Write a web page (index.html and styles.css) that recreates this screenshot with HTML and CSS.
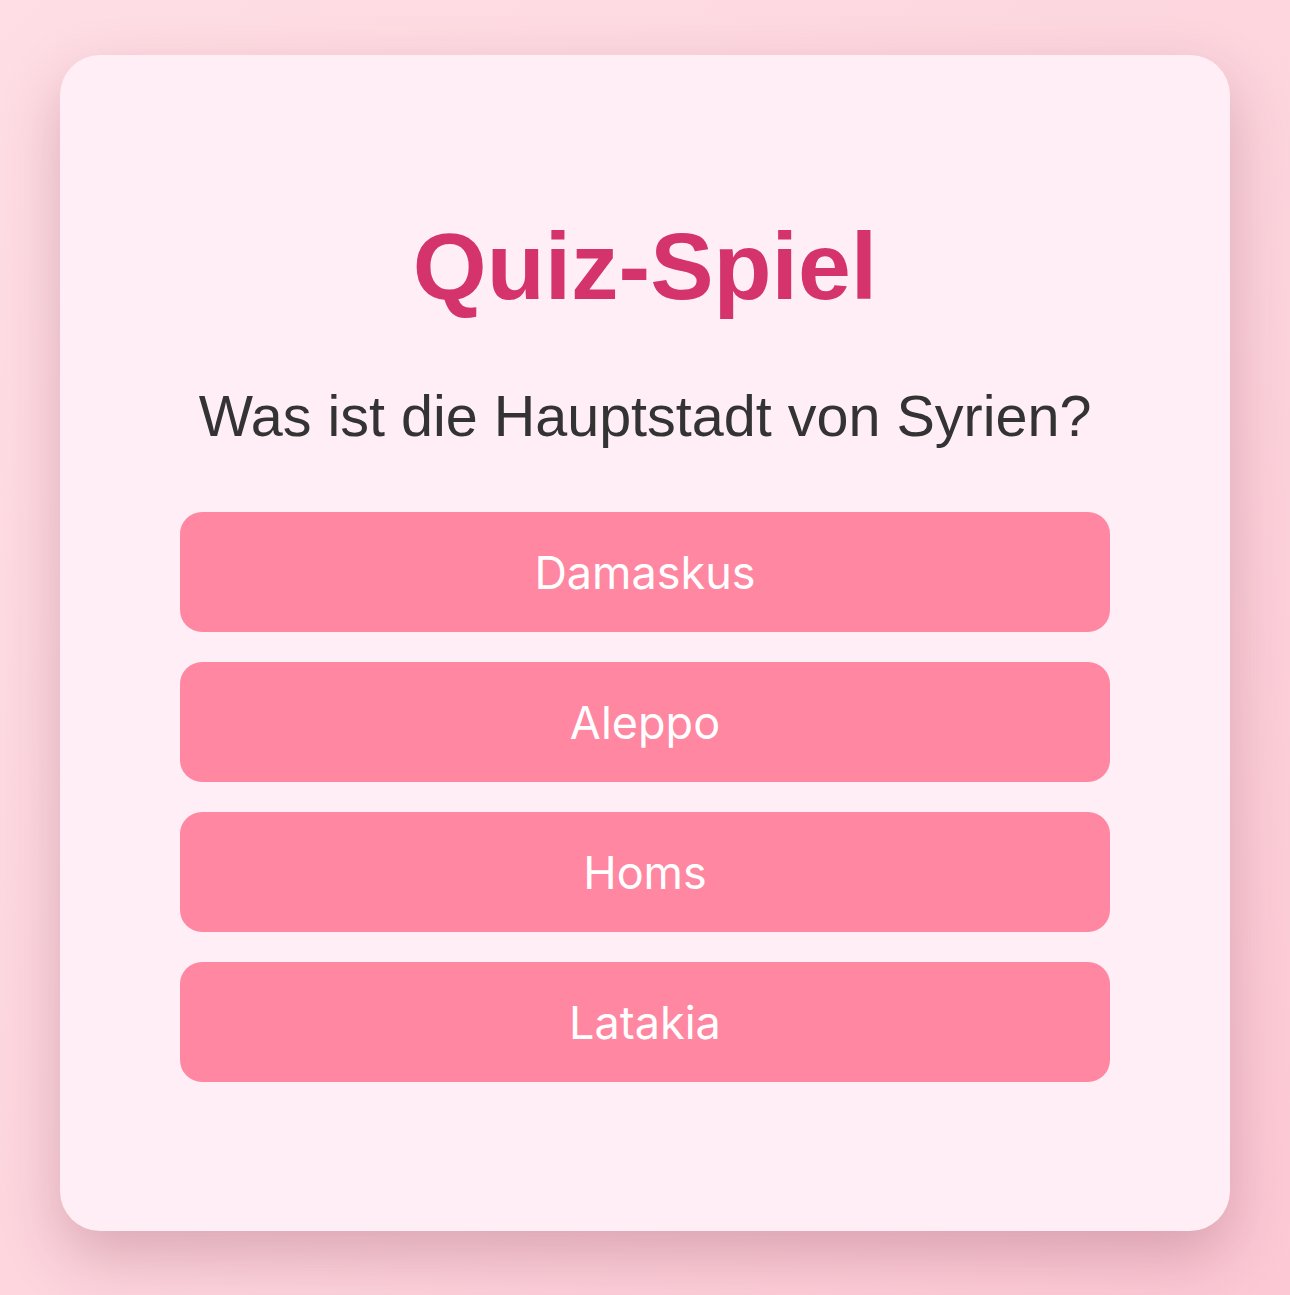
FILE: index.html
```html
<!DOCTYPE html>
<html lang="de">
<head>
<meta charset="utf-8">
<title>Quiz-Spiel</title>
<link rel="stylesheet" href="styles.css">
</head>
<body>
<main class="card">
  <h1 class="title">Quiz-Spiel</h1>
  <p class="question">Was ist die Hauptstadt von Syrien?</p>
  <div class="answers">
    <button class="answer">Damaskus</button>
    <button class="answer">Aleppo</button>
    <button class="answer">Homs</button>
    <button class="answer">Latakia</button>
  </div>
</main>
</body>
</html>
```
FILE: styles.css
```css
html, body {
  margin: 0;
  padding: 0;
}
body {
  min-height: 1295px;
  box-sizing: border-box;
  padding: 55px 60px 0;
  background: linear-gradient(135deg, #ffdee5 0%, #fdd6de 50%, #fcc8d4 100%);
  font-family: "Liberation Sans", Arial, sans-serif;
}
.card {
  background: #ffeef5;
  border-radius: 40px;
  box-shadow: 0 24px 60px rgba(120, 40, 60, 0.26);
  padding: 154px 120px 149px;
  text-align: center;
}
.title {
  margin: 0 0 59px;
  font-size: 95px;
  line-height: 114px;
  font-weight: 700;
  color: #d4336b;
}
.question {
  margin: 0 0 61px;
  font-size: 57.5px;
  line-height: 69px;
  color: #333333;
}
.answers {
  display: flex;
  flex-direction: column;
  gap: 30px;
}
.answer {
  height: 120px;
  border: none;
  border-radius: 22px;
  background: #ff87a1;
  color: #ffffff;
  font-family: Inter, "Noto Sans", sans-serif;
  font-size: 45px;
  padding: 0;
}
```
